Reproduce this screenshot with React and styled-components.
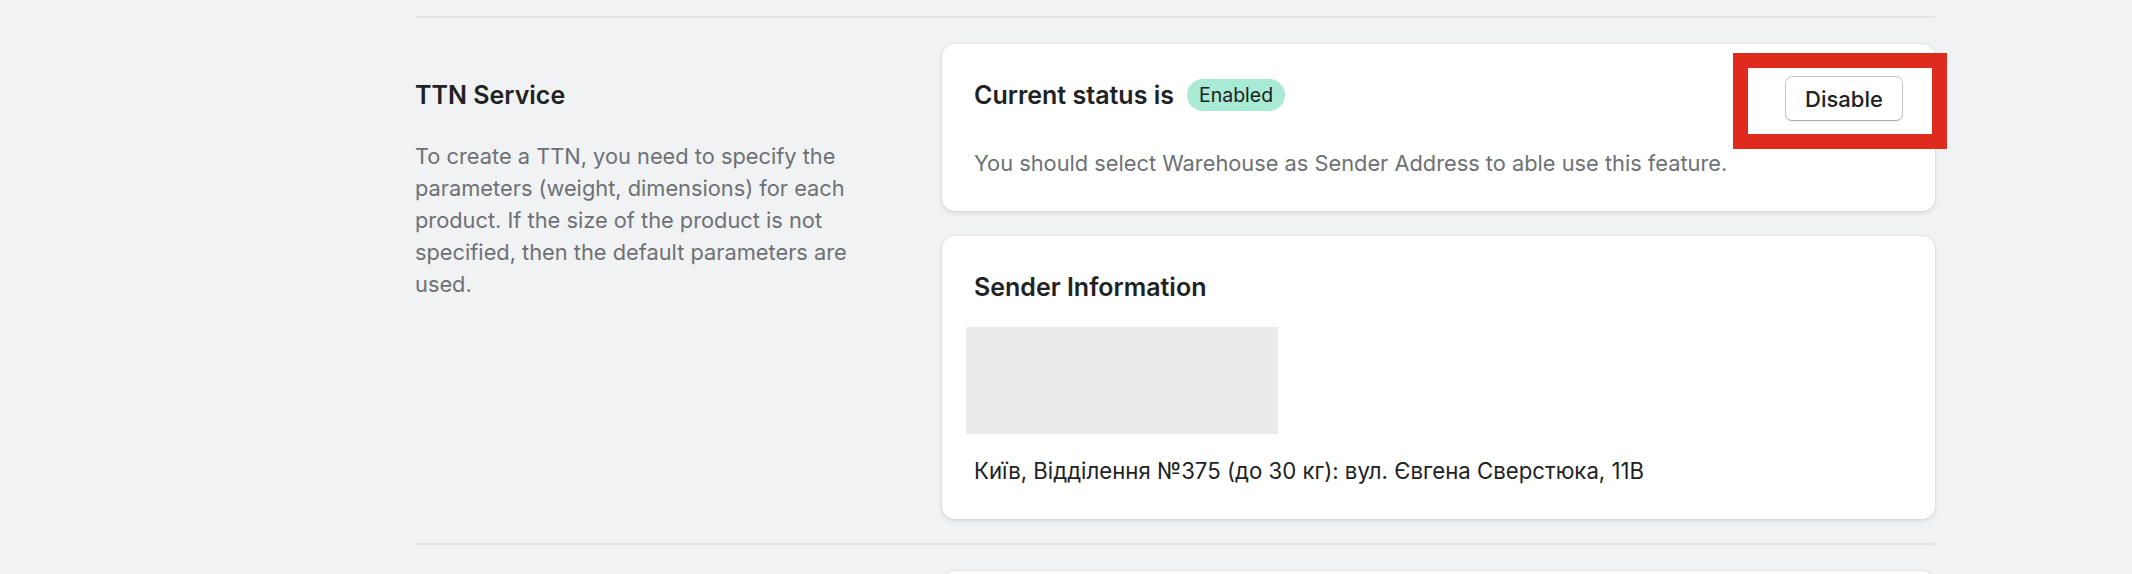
import React from "react";
import styled, { createGlobalStyle } from "styled-components";

const GlobalStyle = createGlobalStyle`
  html, body { margin: 0; padding: 0; background: #f1f2f4; }
  body { font-family: Inter, "Noto Sans", "Liberation Sans", sans-serif; color: #202223; -webkit-font-smoothing: antialiased; }
  * { box-sizing: border-box; }
`;

const Main = styled.main`
  width: 2132px;
  height: 574px;
  overflow: hidden;
  padding: 16px 197px 0 415px;
`;

const Divider = styled.hr`
  margin: 0;
  border: 0;
  height: 2px;
  background: #e3e4e6;
`;

const Section = styled.section`
  display: grid;
  grid-template-columns: 527px 993px;
  padding: 26px 0 24px;
`;

const Annotation = styled.div`
  padding-top: 32px;
  width: 455px;
  display: flex;
  flex-direction: column;
  gap: 26px;
`;

const Heading = styled.h2`
  margin: 0;
  font-size: 25px;
  line-height: 38px;
  font-weight: 600;
  color: #202223;
  display: flex;
  align-items: center;
  gap: 13px;
`;

const Text = styled.p`
  margin: 0;
  font-size: ${(p) => p.$size || "21.8px"};
  line-height: 32px;
  color: ${(p) => (p.$subdued ? "#6d7175" : "#202223")};
`;

const Stack = styled.div`
  display: flex;
  flex-direction: column;
  gap: 25px;
`;

const Card = styled.div`
  position: relative;
  background: #ffffff;
  border-radius: 13px;
  box-shadow: 0 0 0 1px rgba(63, 63, 68, 0.04), 0 2px 5px rgba(63, 63, 68, 0.13);
  padding: 32px;
  display: flex;
  flex-direction: column;
  gap: ${(p) => p.$gap || "26px"};
`;

const CardHeader = styled.div`
  display: flex;
  justify-content: space-between;
  align-items: flex-start;
`;

const Badge = styled.span`
  display: inline-flex;
  align-items: center;
  height: 32px;
  padding: 0 12px;
  border-radius: 16px;
  background: #a8ead3;
  color: #202223;
  font-size: 19.5px;
  font-weight: 400;
`;

const ButtonWrap = styled.div`
  position: relative;
`;

const Button = styled.button`
  height: 45px;
  width: 118px;
  background: #ffffff;
  border: 1px solid #c4c7ca;
  border-bottom-color: #a9aeb2;
  border-radius: 7px;
  box-shadow: 0 1px 0 rgba(0, 0, 0, 0.05);
  font-family: inherit;
  font-size: 22px;
  font-weight: 500;
  color: #202223;
  cursor: pointer;
`;

const Highlight = styled.div`
  position: absolute;
  left: -52px;
  top: -23px;
  width: 214px;
  height: 96px;
  border: 15px solid #df2a1e;
  pointer-events: none;
`;

const MapPlaceholder = styled.div`
  width: 312px;
  height: 107px;
  margin-left: -8px;
  background: #ebebeb;
`;

const NextCard = styled.div`
  grid-column: 2;
  height: 40px;
  background: #ffffff;
  border-radius: 13px 13px 0 0;
  box-shadow: 0 0 0 1px rgba(63, 63, 68, 0.04), 0 2px 5px rgba(63, 63, 68, 0.13);
`;

const NextSection = styled.section`
  display: grid;
  grid-template-columns: 527px 993px;
  padding-top: 26px;
`;

export default function App() {
  return (
    <>
      <GlobalStyle />
      <Main>
        <Divider />
        <Section>
          <Annotation>
            <Heading>TTN Service</Heading>
            <Text $subdued>
              To create a TTN, you need to specify the parameters (weight,
              dimensions) for each product. If the size of the product is not
              specified, then the default parameters are used.
            </Text>
          </Annotation>
          <Stack>
            <Card>
              <CardHeader>
                <Heading>
                  Current status is <Badge>Enabled</Badge>
                </Heading>
                <ButtonWrap>
                  <Button>Disable</Button>
                  <Highlight />
                </ButtonWrap>
              </CardHeader>
              <Text $subdued>
                You should select Warehouse as Sender Address to able use this
                feature.
              </Text>
            </Card>
            <Card $gap="21px">
              <Heading>Sender Information</Heading>
              <MapPlaceholder />
              <Text $size="22.2px">
                Київ, Відділення №375 (до 30 кг): вул. Євгена Сверстюка, 11В
              </Text>
            </Card>
          </Stack>
        </Section>
        <Divider />
        <NextSection>
          <NextCard />
        </NextSection>
      </Main>
    </>
  );
}
